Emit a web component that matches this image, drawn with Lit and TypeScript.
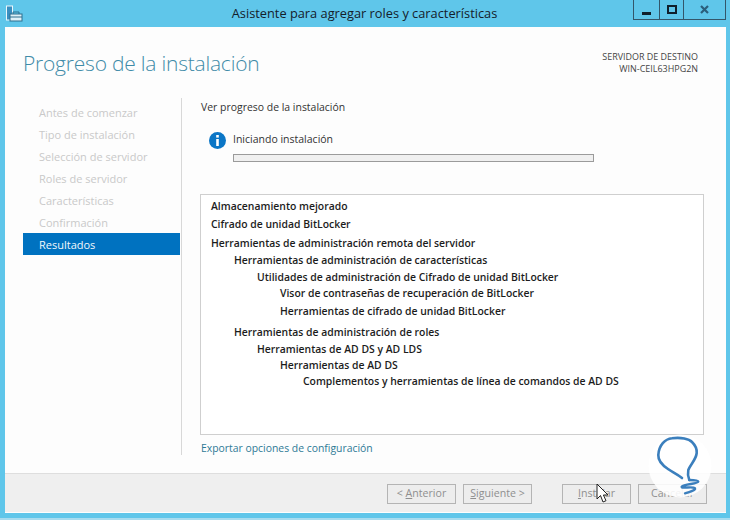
import { LitElement, html, css } from "lit";
import { customElement } from "lit/decorators.js";

const steps = ["Antes de comenzar", "Tipo de instalación", "Selección de servidor", "Roles de servidor", "Características", "Confirmación"];
const tree: [string, number, number][] = [
  ["Almacenamiento mejorado", 0, 18],
  ["Cifrado de unidad BitLocker", 0, 18.5],
  ["Herramientas de administración remota del servidor", 0, 17.5],
  ["Herramientas de administración de características", 1, 16.5],
  ["Utilidades de administración de Cifrado de unidad BitLocker", 2, 16.5],
  ["Visor de contraseñas de recuperación de BitLocker", 3, 17.5],
  ["Herramientas de cifrado de unidad BitLocker", 3, 21.5],
  ["Herramientas de administración de roles", 1, 16.5],
  ["Herramientas de AD DS y AD LDS", 2, 16],
  ["Herramientas de AD DS", 3, 16],
  ["Complementos y herramientas de línea de comandos de AD DS", 4, 16],
];

@customElement("app-root")
export class AppRoot extends LitElement {
  static styles = css`
    :host { display: block; width: 730px; height: 520px; overflow: hidden; position: relative; font-family: "Open Sans", "Noto Sans", sans-serif; }
    .frame { width: 730px; height: 520px; box-sizing: border-box; background: #5fc6ea; display: flex; flex-direction: column; padding: 0 4px 5px 5px; border-bottom: 2px solid #a8dcef; }
    .titlebar { height: 27px; flex: none; display: flex; align-items: center; position: relative; margin: 0 -4px 0 -5px; }
    .appicon { margin-left: 5px; width: 18px; height: 18px; flex: none; }
    .title { flex: 1; text-align: center; font-size: 12.8px; color: #14202a; padding-right: 24px; padding-bottom: 2px; }
    .controls { position: absolute; top: 0; right: 4px; height: 19px; display: flex; border: 1px solid #33566a; border-top: none; }
    .ctl { display: flex; align-items: center; justify-content: center; height: 19px; border-right: 1px solid #33566a; width: 23px; }
    .ctl.first { width: 25px; }
    .ctl.last { border-right: none; width: 41px; }
    .window { flex: 1; background: #fdfdfd; display: flex; flex-direction: column; min-height: 0; }
    .main { flex: 1; min-height: 0; display: flex; flex-direction: column; padding: 0 22px 0 18px; }
    .head { height: 71px; display: flex; justify-content: space-between; flex: none; }
    .h1 { font-size: 21px; letter-spacing: -0.22px; color: #3f8ba8; font-weight: 300; line-height: 29px; margin-top: 22px; }
    .dest { font-size: 8.95px; line-height: 12px; color: #444; text-align: right; margin: 24px 6px 0 0; }
    .cols { flex: 1; display: flex; min-height: 0; padding-bottom: 18px; }
    .nav { width: 158px; flex: none; display: flex; flex-direction: column; border-right: 1px solid #d8d8d8; padding-top: 3px; }
    .nav div { height: 22px; line-height: 23px; padding-left: 16px; font-size: 11px; color: #c9c9c9; box-sizing: border-box; }
    .nav div.active { background: #0072c0; color: #f2f8fc; margin-right: 1px; }
    .content { flex: 1; padding-left: 18px; display: flex; flex-direction: column; min-width: 0; font-size: 10.4px; color: #333; }
    .sub { line-height: 14px; height: 14px; margin: 2px 0 0 1px; font-size: 10.45px; }
    .status { display: flex; margin-top: 18px; gap: 7px; padding-left: 9px; }
    .status svg { flex: none; }
    .stxt { display: flex; flex-direction: column; gap: 7px; }
    .stxt span { line-height: 15px; font-size: 10.5px; }
    .bar { width: 359px; height: 6px; border: 1px solid #9b9b9b; background: #f0f0f0; }
    .list { flex: 1; margin-top: 32px; border: 1px solid #cfcfcf; background: #fff; padding: 2px 10px; font-size: 10.4px; color: #1c1c1c; font-weight: 600; }
    .row { line-height: 18px; white-space: nowrap; }
    .link { color: #2e7a96; line-height: 14px; margin: 6px 0 0 1px; height: 14px; }
    .footer { height: 39px; flex: none; background: #efefef; border-top: 1px solid #dedede; display: flex; align-items: center; justify-content: flex-end; padding: 1px 19px 0 0; box-sizing: border-box; margin-bottom: 1px; }
    .btn { width: 69px; height: 20px; box-sizing: border-box; border: 1px solid #b4b4b4; background: #ededed; color: #8f8f8f; font-size: 10.6px; display: flex; align-items: center; justify-content: center; padding-bottom: 1px; }
    .btn u { text-underline-offset: 1px; }
    .b2 { margin-left: 7px; }
    .b3 { margin-left: 30px; }
    .b4 { margin-left: 7px; }
    .logo { position: absolute; left: 648px; top: 434px; width: 64px; height: 64px; }
    .cursor { position: absolute; left: 596px; top: 483px; }
  `;

  render() {
    return html`
      <div class="frame">
        <div class="titlebar">
          <svg class="appicon" viewBox="0 0 18 18" fill="none">
            <rect x="1.5" y="1" width="6" height="14" fill="#3a8fc0" stroke="#eaf6fb"/>
            <rect x="5" y="9" width="12" height="7" fill="#dff1f8" stroke="#2f6e8e"/>
            <path d="M8 9V7h6v2M5 12h12" stroke="#2f6e8e"/>
          </svg>
          <div class="title">Asistente para agregar roles y características</div>
          <div class="controls">
            <div class="ctl first"><svg width="10" height="10" viewBox="0 0 10 10"><rect x="0" y="7" width="9" height="3" fill="#10202c"/></svg></div>
            <div class="ctl"><svg width="10" height="10" viewBox="0 0 10 10"><rect x="1" y="1" width="8" height="7" fill="none" stroke="#10202c" stroke-width="2"/></svg></div>
            <div class="ctl last"><svg width="10" height="10" viewBox="0 0 10 10"><path d="M1 1l7 7M8 1L1 8" stroke="#2b5f7c" stroke-width="2.2"/></svg></div>
          </div>
        </div>
        <div class="window">
          <div class="main">
            <div class="head">
              <div class="h1">Progreso de la instalación</div>
              <div class="dest">SERVIDOR DE DESTINO<br />WIN-CEIL63HPG2N</div>
            </div>
            <div class="cols">
              <div class="nav">
                ${steps.map((s) => html`<div>${s}</div>`)}
                <div class="active">Resultados</div>
              </div>
              <div class="content">
                <div class="sub">Ver progreso de la instalación</div>
                <div class="status">
                  <svg width="17" height="17" viewBox="0 0 17 17">
                    <circle cx="8.5" cy="8.5" r="8.5" fill="#0b76c6"/>
                    <rect x="7.2" y="3" width="2.6" height="2.6" fill="#fff"/>
                    <rect x="7.2" y="7" width="2.6" height="7" fill="#fff"/>
                  </svg>
                  <div class="stxt"><span>Iniciando instalación</span><div class="bar"></div></div>
                </div>
                <div class="list">
                  ${tree.map(([t, lvl, h]) => html`<div class="row" style="padding-left:${lvl * 23}px;height:${h}px">${t}</div>`)}
                </div>
                <div class="link">Exportar opciones de configuración</div>
              </div>
            </div>
          </div>
          <div class="footer">
            <div class="btn">&lt;&nbsp;<u>A</u>nterior</div>
            <div class="btn b2"><u>S</u>iguiente&nbsp;&gt;</div>
            <div class="btn b3"><u>I</u>nstalar</div>
            <div class="btn b4">Cancelar</div>
          </div>
        </div>
      </div>
      <svg class="logo" viewBox="0 0 64 64" fill="none">
        <circle cx="32" cy="32" r="31.5" fill="#fff" fill-opacity="0.88"/>
        <path d="M34 44 C29 40 24 38 20 35 C14 31 10 27 10.3 21 C11 11 17 5 24 4.3 C33 3 41 5 44 8 C48 12 49 16 48.7 19 C48 26 42 31 40.3 36 C39.5 40 40 43 41.3 46" stroke="#3b7fbd" stroke-width="2.6" stroke-linecap="round"/>
        <path d="M41.3 46 C45 46 50 46 50.3 47.7 C50 50 36 50 33.7 52.7 C33 55 45 52 47 54.3 C48 56 42 58 37 59.3" stroke="#3b7fbd" stroke-width="2.4" stroke-linecap="round"/>
      </svg>
      <svg class="cursor" width="14" height="22" viewBox="0 0 14 22">
        <path d="M1 1v15l3.5-3.5L7 19l3-1.3-2.6-5.7H12z" fill="#fff" stroke="#222" stroke-width="1"/>
      </svg>
    `;
  }
}
